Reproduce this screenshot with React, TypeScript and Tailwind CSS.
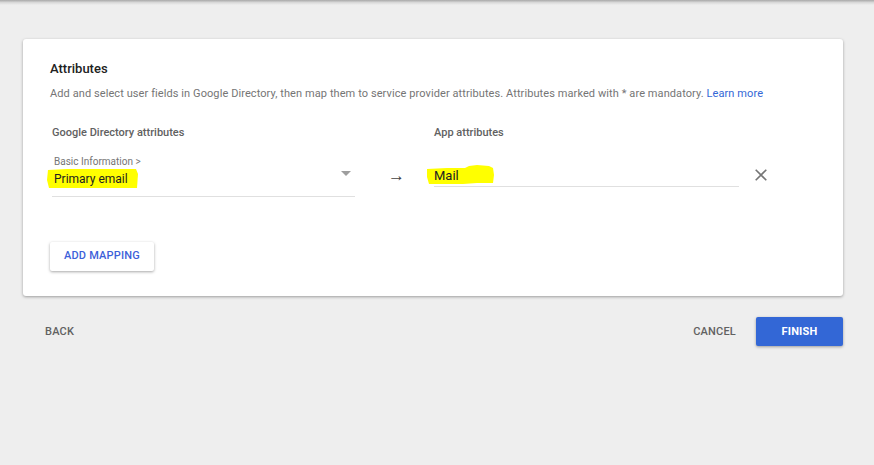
import React from "react";

function Highlight1() {
  return (
    <svg
      className="absolute left-[-7px] top-[-3px] pointer-events-none"
      width="92"
      height="21"
      viewBox="0 0 92 21"
    >
      <polygon
        points="1,2 20,1 50,1 80,1 89,1 91,6 90,20 60,20 30,20 8,20 2,20 0,12"
        fill="#ffff00"
      />
    </svg>
  );
}

function Highlight2() {
  return (
    <svg
      className="absolute left-[-7px] top-[-3px] pointer-events-none"
      width="68"
      height="20"
      viewBox="0 0 68 20"
    >
      <polygon
        points="0,4 20,3 38,3 42,1 50,0 62,1 66,3 67,10 66,18 50,18 36,19 20,19 2,19 0,12"
        fill="#ffff00"
      />
    </svg>
  );
}

export default function App() {
  return (
    <div
      className="w-[874px] h-[465px] bg-[#eeeeee] overflow-hidden flex flex-col"
      style={{ fontFamily: "Roboto, 'Liberation Sans', sans-serif" }}
    >
      <div className="h-[5px] w-full bg-gradient-to-b from-[#a8a8a8] via-[#d8d8d8] to-[#eeeeee]" />
      <div className="mt-[34px] ml-[23px] w-[820px] h-[257px] bg-white rounded-[3px] shadow-[0_1px_3px_rgba(0,0,0,0.35)] pt-[21px] pl-[27px] flex flex-col">
        <div className="text-[13px] leading-[18px] font-medium text-[#212121]">
          Attributes
        </div>
        <div className="mt-[8px] text-[11px] leading-[16px] text-[#757575] tracking-[0.085px]">
          Add and select user fields in Google Directory, then map them to
          service provider attributes. Attributes marked with * are mandatory.{" "}
          <span className="text-[#3367d6]">Learn more</span>
        </div>
        <div className="mt-[23px] pl-[2px] flex text-[11px] leading-[16px] font-medium text-[#616161]">
          <div className="w-[382px]">Google Directory attributes</div>
          <div>App attributes</div>
        </div>
        <div className="mt-[15px] pl-[2px] flex items-start">
          <div className="w-[303px] border-b border-[#e0e0e0] pb-[9px] flex items-start">
            <div className="flex-1 flex flex-col pl-[2px]">
              <div className="text-[10px] leading-[12px] text-[#757575]">
                Basic Information &gt;
              </div>
              <div className="mt-[3px] text-[12px] leading-[16px] text-[#212121]">
                <span className="relative inline-block">
                  <Highlight1 />
                  <span className="relative">Primary email</span>
                </span>
              </div>
            </div>
            <svg
              className="mt-[15px] mr-[4px]"
              width="10"
              height="5"
              viewBox="0 0 10 5"
            >
              <polygon points="0,0 10,0 5,5" fill="#9e9e9e" />
            </svg>
          </div>
          <div className="w-[79px] pl-[33px] pt-[11px] text-[17px] leading-[16px] text-[#424242] font-light">
            →
          </div>
          <div className="w-[305px] mt-[12px] border-b border-[#e0e0e0] pb-[2px]">
            <div className="text-[13px] leading-[16px] text-[#212121]">
              <span className="relative inline-block">
                <Highlight2 />
                <span className="relative">Mail</span>
              </span>
            </div>
          </div>
          <svg
            className="ml-[16px] mt-[13px]"
            width="12"
            height="12"
            viewBox="0 0 12 12"
          >
            <path
              d="M0.7 0.7 L11.3 11.3 M11.3 0.7 L0.7 11.3"
              stroke="#757575"
              strokeWidth="1.6"
              fill="none"
            />
          </svg>
        </div>
        <div className="mt-[45px]">
          <button className="w-[104px] h-[29px] bg-white rounded-[2px] shadow-[0_1px_3px_rgba(0,0,0,0.35)] text-[11px] font-medium text-[#3d5fd9] tracking-[0.2px]">
            ADD MAPPING
          </button>
        </div>
      </div>
      <div className="mt-[21px] flex items-center h-[29px] pl-[45px] pr-[31px]">
        <div className="text-[11px] font-medium text-[#616161] tracking-[0.2px] pt-[1px]">
          BACK
        </div>
        <div className="flex-1" />
        <div className="text-[11px] font-medium text-[#616161] tracking-[0.2px] pt-[1px]">
          CANCEL
        </div>
        <button className="ml-[20px] w-[87px] h-[29px] bg-[#3367d6] rounded-[2px] shadow-[0_1px_3px_rgba(0,0,0,0.35)] text-[11px] font-bold text-white tracking-[0.2px] pt-[1px]">
          FINISH
        </button>
      </div>
    </div>
  );
}
